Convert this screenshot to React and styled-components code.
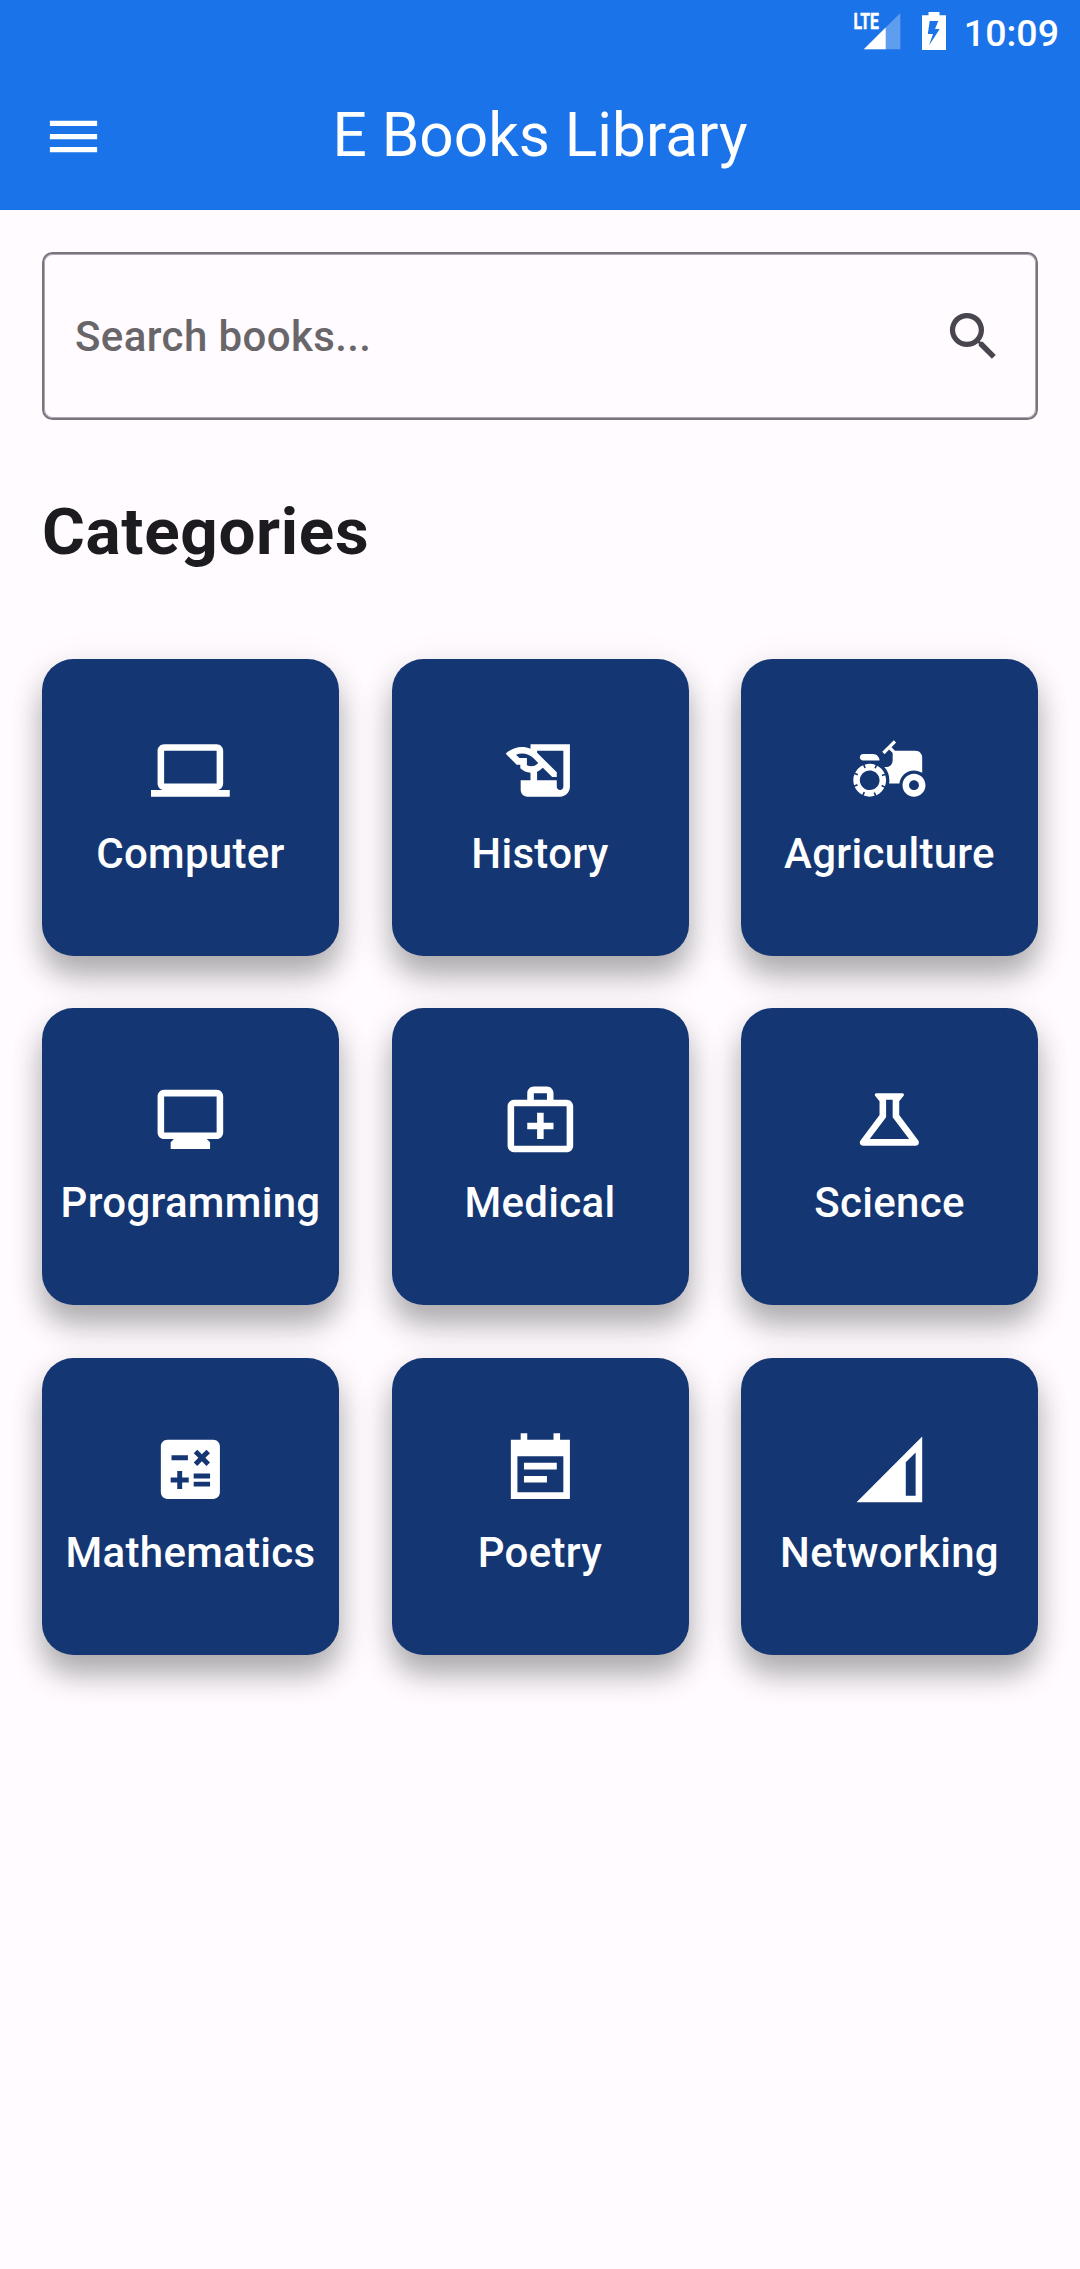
import React from "react";
import styled, { createGlobalStyle } from "styled-components";
import {
  MdHistoryEdu,
  MdAgriculture,
  MdOutlineMedicalServices,
  MdOutlineScience,
  MdCalculate,
} from "react-icons/md";

const GlobalStyle = createGlobalStyle`
  *, *::before, *::after { box-sizing: border-box; }
  body {
    margin: 0;
    background: #fffbff;
    font-family: Roboto, "Liberation Sans", sans-serif;
  }
`;

const Screen = styled.div`
  width: 1080px;
  height: 2269px;
  display: flex;
  flex-direction: column;
  background: #fffbff;
  overflow: hidden;
`;

const Header = styled.header`
  height: 210px;
  flex: none;
  display: flex;
  flex-direction: column;
  background: #1a73e8;
  color: #fff;
`;

const StatusBar = styled.div`
  height: 63px;
  display: flex;
  justify-content: flex-end;
  align-items: flex-start;
  padding-right: 21px;
`;

const SignalIcon = styled.svg`
  width: 54px;
  height: 48px;
  margin-top: 3px;
  margin-right: 17px;
  overflow: visible;
`;

const NetworkType = styled.text`
  font-size: 22.5px;
  font-weight: 700;
  fill: #fff;
  stroke: #fff;
  stroke-width: 0.5px;
`;

const BatteryIcon = styled.svg`
  width: 26px;
  height: 39px;
  margin-top: 12px;
  margin-right: 17px;
`;

const Clock = styled.span`
  font-size: 37.5px;
  font-weight: 500;
  line-height: 44px;
  margin-top: 11px;
`;

const AppBar = styled.div`
  height: 147px;
  display: grid;
  grid-template-columns: 147px 1fr 147px;
  align-items: center;
`;

const MenuButton = styled.button`
  width: 147px;
  height: 147px;
  padding: 0;
  border: 0;
  background: none;
  color: inherit;
  display: flex;
  align-items: center;
  justify-content: center;
`;

const Title = styled.h1`
  margin: 0;
  font-size: 60.375px;
  font-weight: 400;
  line-height: 74px;
  text-align: center;
  padding-bottom: 1px;
`;

const Content = styled.main`
  padding: 42px;
  display: flex;
  flex-direction: column;
`;

const SearchField = styled.div`
  height: 168px;
  border: 2px solid #79747e;
  box-shadow: inset 0 0 0 1px rgba(121, 116, 126, 0.62);
  border-radius: 10.5px;
  padding: 0 31px 0 31px;
  display: flex;
  align-items: center;
  justify-content: space-between;
  color: #49454f;
`;

const Placeholder = styled.span`
  font-size: 42px;
  font-weight: 500;
  line-height: 63px;
  letter-spacing: 0.39px;
  color: #69666a;
`;

const SectionTitle = styled.h2`
  margin: 70px 0 0;
  font-size: 65.625px;
  font-weight: 700;
  line-height: 84px;
  letter-spacing: 0.656px;
  color: #1c1b1f;
`;

const Grid = styled.div`
  margin-top: 84.9px;
  display: grid;
  grid-template-columns: repeat(3, 297px);
  grid-auto-rows: 297px;
  gap: 52.5px;
`;

const Card = styled.div`
  display: flex;
  flex-direction: column;
  align-items: center;
  padding-top: 72px;
  border-radius: 31.5px;
  background: #143673;
  color: #fff;
  box-shadow: 0 20px 30px rgba(0, 0, 0, 0.3), 0 4px 40px rgba(0, 0, 0, 0.06);
`;

const CardLabel = styled.span`
  margin-top: 12px;
  font-size: 42px;
  font-weight: 500;
  line-height: 63px;
  letter-spacing: 0.3px;
  white-space: nowrap;
`;

const Icon = styled.svg`
  width: ${(p) => p.$size}px;
  height: ${(p) => p.$size}px;
  flex: none;
  fill: currentColor;
`;

const Glyph = ({ d, size = 78.75 }) => (
  <Icon $size={size} viewBox="0 0 24 24" aria-hidden="true">
    <path d={d} />
  </Icon>
);

const paths = {
  menu: "M3 18h18v-2H3v2zm0-5h18v-2H3v2zm0-7v2h18V6H3z",
  search:
    "M15.5 14h-.79l-.28-.27A6.471 6.471 0 0 0 16 9.5 6.5 6.5 0 1 0 9.5 16c1.61 0 3.09-.59 4.23-1.57l.27.28v.79l5 4.99L20.49 19l-4.99-5zm-6 0C7.01 14 5 11.99 5 9.5S7.01 5 9.5 5 14 7.01 14 9.5 11.99 14 9.5 14z",
  laptop:
    "M20 18c1.1 0 1.99-.9 1.99-2L22 6c0-1.1-.9-2-2-2H4c-1.1 0-2 .9-2 2v10c0 1.1.9 2 2 2H0v2h24v-2h-4zM4 6h16v10H4V6z",
  monitor:
    "M20 3H4c-1.1 0-2 .9-2 2v11c0 1.1.9 2 2 2h3l-1 1v2h12v-2l-1-1h3c1.1 0 2-.9 2-2V5c0-1.1-.9-2-2-2zm0 13H4V5h16v11z",
  note: "M17 10H7v2h10v-2zm4-7h-3V1h-2v2H8V1H6v2H3v18h18V3zm-2 16H5V8h14v11zm-5-5H7v2h7v-2z",
  network: "M2 22h20V2L2 22zm18-2h-3V9.83l3-3V20z",
};

const categories = [
  { label: "Computer", icon: <Glyph d={paths.laptop} /> },
  { label: "History", icon: <MdHistoryEdu size={78.75} /> },
  { label: "Agriculture", icon: <MdAgriculture size={78.75} /> },
  { label: "Programming", icon: <Glyph d={paths.monitor} /> },
  { label: "Medical", icon: <MdOutlineMedicalServices size={78.75} /> },
  { label: "Science", icon: <MdOutlineScience size={78.75} /> },
  { label: "Mathematics", icon: <MdCalculate size={78.75} /> },
  { label: "Poetry", icon: <Glyph d={paths.note} /> },
  { label: "Networking", icon: <Glyph d={paths.network} /> },
];

const LteSignal = () => (
  <SignalIcon viewBox="-4 -8 54 48">
    <path d="M46.3 2v36.3H9.8z" fill="#fff" fillOpacity=".3" />
    <path d="M31.7 16.5v21.8H9.8z" fill="#fff" />
    <NetworkType x="-0.5" y="18.2" textLength="25.5" lengthAdjust="spacingAndGlyphs">
      LTE
    </NetworkType>
  </SignalIcon>
);

const Battery = () => (
  <BatteryIcon viewBox="0 0 26 39" aria-label="Battery charging">
    <path
      fill="#fff"
      fillRule="evenodd"
      d="M7.5 0h11v3.2H25V38H1V3.2h6.5zM8.7 9L6.8 22h5.2L8 33.5 18.7 17H14l3.3-8z"
    />
  </BatteryIcon>
);

export default function App() {
  return (
    <Screen>
      <GlobalStyle />
      <Header>
        <StatusBar>
          <LteSignal />
          <Battery />
          <Clock>10:09</Clock>
        </StatusBar>
        <AppBar>
          <MenuButton aria-label="Menu">
            <Glyph d={paths.menu} size={63} />
          </MenuButton>
          <Title>E Books Library</Title>
        </AppBar>
      </Header>
      <Content>
        <SearchField>
          <Placeholder>Search books...</Placeholder>
          <Glyph d={paths.search} size={63} />
        </SearchField>
        <SectionTitle>Categories</SectionTitle>
        <Grid>
          {categories.map(({ label, icon }) => (
            <Card key={label}>
              {icon}
              <CardLabel>{label}</CardLabel>
            </Card>
          ))}
        </Grid>
      </Content>
    </Screen>
  );
}
